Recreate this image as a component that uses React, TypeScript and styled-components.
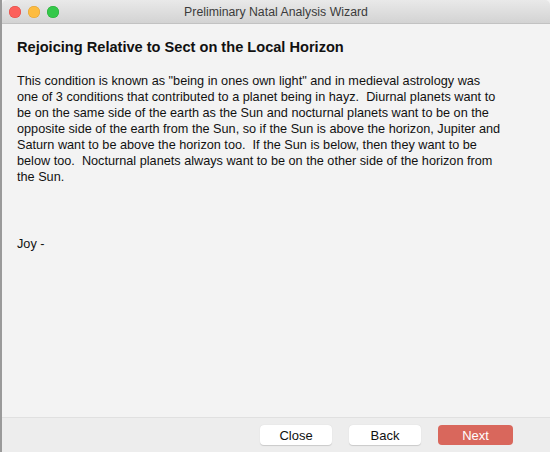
import styled, { createGlobalStyle } from 'styled-components'

const GlobalStyle = createGlobalStyle`
    html, body {
        margin: 0;
        padding: 0;
        background: #ececec;
    }
    body {
        font-family: "Liberation Sans", Arial, sans-serif;
    }
`

const Window = styled.div`
    display: flex;
    flex-direction: column;
    width: 550px;
    height: 452px;
    box-sizing: border-box;
    border-left: 2px solid #9a9a9a;
    background: #f3f3f3;
    overflow: hidden;
`

const TitleBar = styled.div`
    position: relative;
    display: flex;
    align-items: center;
    justify-content: center;
    height: 23px;
    flex-shrink: 0;
    background: linear-gradient(#e9e9e9, #d3d3d3);
    border-bottom: 1px solid #c2c2c2;
    border-top-left-radius: 5px;
    border-top-right-radius: 5px;
`

const Lights = styled.div`
    position: absolute;
    left: 7px;
    top: 6px;
    display: flex;
    gap: 7px;
`

const Light = styled.span<{ $color: string; $edge: string }>`
    width: 12px;
    height: 12px;
    border-radius: 50%;
    background: ${p => p.$color};
    box-shadow: inset 0 0 0 0.5px ${p => p.$edge};
`

const Title = styled.div`
    font-size: 12.3px;
    color: #3b3b3b;
`

const Body = styled.div`
    flex: 1;
    padding: 15px 15px 0 15px;
    color: #111;
    font-size: 12.7px;
    line-height: 16px;
`

const Heading = styled.div`
    font-weight: bold;
    font-size: 14.6px;
    margin-bottom: 18px;
`

const Text = styled.p`
    margin: 0;
    white-space: pre-wrap;
`

const Sign = styled.p`
    margin: 51px 0 0 0;
`

const Footer = styled.div`
    display: flex;
    justify-content: flex-end;
    align-items: center;
    gap: 17px;
    height: 34px;
    flex-shrink: 0;
    padding-right: 37px;
    border-top: 1px solid #e0e0e0;
    background: #ededed;
`

const Button = styled.button<{ $primary?: boolean }>`
    width: ${p => (p.$primary ? 75 : 72)}px;
    height: 20px;
    padding: 0;
    border: none;
    border-radius: 4px;
    font-family: inherit;
    font-size: 13px;
    color: ${p => (p.$primary ? '#fff' : '#111')};
    background: ${p => (p.$primary ? '#d9675c' : '#fff')};
    box-shadow: ${p => (p.$primary ? 'none' : '0 0.5px 1px rgba(0,0,0,0.15)')};
`

const paragraph = `This condition is known as "being in ones own light" and in medieval astrology was
one of 3 conditions that contributed to a planet being in hayz.  Diurnal planets want to
be on the same side of the earth as the Sun and nocturnal planets want to be on the
opposite side of the earth from the Sun, so if the Sun is above the horizon, Jupiter and
Saturn want to be above the horizon too.  If the Sun is below, then they want to be
below too.  Nocturnal planets always want to be on the other side of the horizon from
the Sun.`

const App = () => {
    return (
        <>
            <GlobalStyle />
            <Window>
                <TitleBar>
                    <Lights>
                        <Light $color="#fc605b" $edge="#de4a43" />
                        <Light $color="#fdbc40" $edge="#dea036" />
                        <Light $color="#34c84a" $edge="#27aa35" />
                    </Lights>
                    <Title>Preliminary Natal Analysis Wizard</Title>
                </TitleBar>
                <Body>
                    <Heading>Rejoicing Relative to Sect on the Local Horizon</Heading>
                    <Text>{paragraph}</Text>
                    <Sign>Joy -</Sign>
                </Body>
                <Footer>
                    <Button>Close</Button>
                    <Button>Back</Button>
                    <Button $primary>Next</Button>
                </Footer>
            </Window>
        </>
    )
}

export default App
